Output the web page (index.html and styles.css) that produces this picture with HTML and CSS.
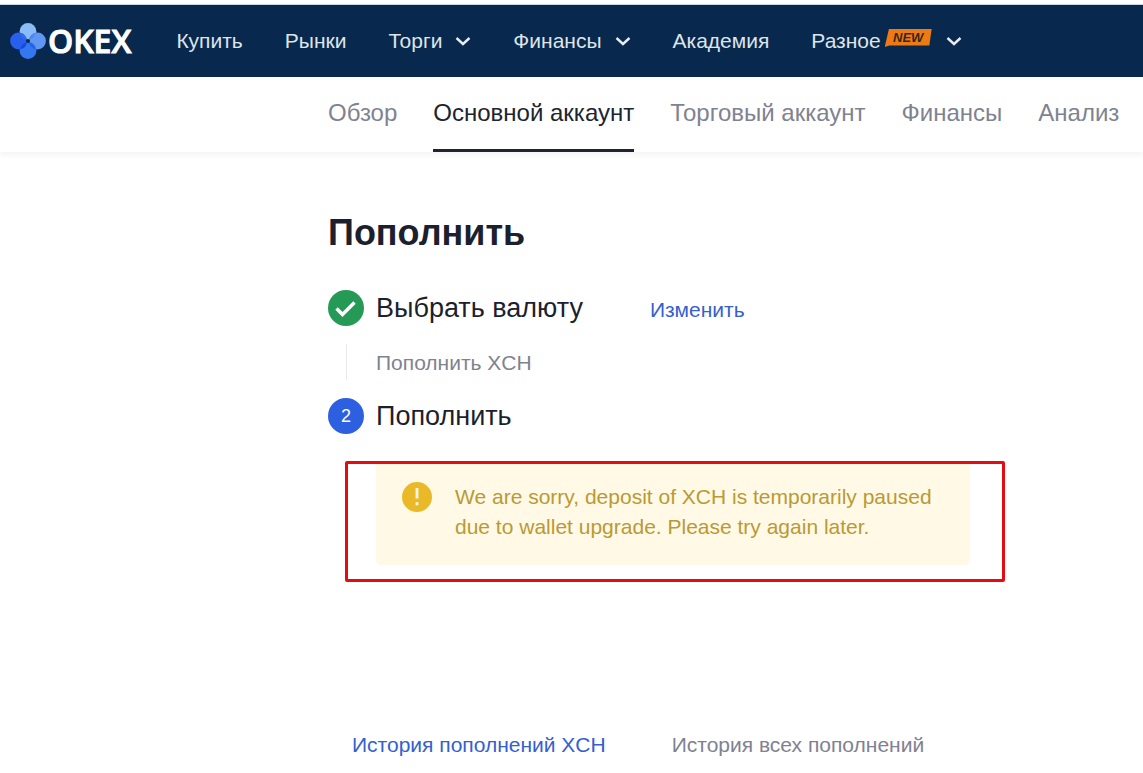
FILE: index.html
```html
<!DOCTYPE html>
<html lang="ru">
<head>
<meta charset="utf-8">
<title>OKEX</title>
<link rel="stylesheet" href="styles.css">
</head>
<body>
<header class="header">
  <a class="logo" href="#">
    <svg class="logo-mark" viewBox="0 0 36 36" aria-hidden="true">
      <circle cx="18" cy="8.500" r="8.400" fill="#8bbcf8"/>
      <circle cx="27.500" cy="18" r="8.400" fill="#6097f3"/>
      <circle cx="18" cy="27.500" r="8.400" fill="#3478f1"/>
      <circle cx="8.500" cy="18" r="8.400" fill="#2860ec"/>
      <path d="M10.500 10Q14.500 9.500 17 16.500Q11 15.500 10.500 10Z" fill="#306de9"/>
      <path d="M25.500 10Q25 15.500 19 16.500Q20.500 10 25.500 10Z" fill="#5089ec"/>
      <path d="M10.500 26Q11 20.500 17 19.500Q15.500 26 10.500 26Z" fill="#164bdc"/>
      <path d="M25.500 26Q25 20.500 19 19.500Q20.500 26 25.500 26Z" fill="#2264e3"/>
      <circle cx="18" cy="18" r="2" fill="#08284d"/>
    </svg>
    <span class="logo-text">OKEX</span>
  </a>
  <nav class="nav">
    <a class="nav-link" href="#">Купить</a>
    <a class="nav-link" href="#">Рынки</a>
    <a class="nav-link" href="#">Торги<svg class="chevron" viewBox="0 0 16 10" aria-hidden="true"><path d="M1.500 2L8 8L14.500 2"/></svg></a>
    <a class="nav-link" href="#">Финансы<svg class="chevron" viewBox="0 0 16 10" aria-hidden="true"><path d="M1.500 2L8 8L14.500 2"/></svg></a>
    <a class="nav-link" href="#">Академия</a>
    <a class="nav-link" href="#">Разное<span class="badge">NEW</span><svg class="chevron" viewBox="0 0 16 10" aria-hidden="true"><path d="M1.500 2L8 8L14.500 2"/></svg></a>
  </nav>
</header>
<nav class="tabs">
  <a class="tab" href="#">Обзор</a>
  <a class="tab tab-active" href="#">Основной аккаунт</a>
  <a class="tab" href="#">Торговый аккаунт</a>
  <a class="tab" href="#">Финансы</a>
  <a class="tab" href="#">Анализ</a>
</nav>
<main class="content">
  <h1 class="title">Пополнить</h1>
  <section class="step">
    <svg class="step-icon" viewBox="0 0 36 36" aria-hidden="true"><circle cx="18" cy="18" r="18" fill="#259a56"/><path d="M8.500 18.500l6 6L26.500 12.500" fill="none" stroke="#fff" stroke-width="3.400"/></svg>
    <h2 class="step-title">Выбрать валюту</h2>
    <a class="change" href="#">Изменить</a>
  </section>
  <div class="detail">
    <span class="line"></span>
    <p class="detail-text">Пополнить XCH</p>
  </div>
  <section class="step">
    <span class="step-icon step-number">2</span>
    <h2 class="step-title">Пополнить</h2>
  </section>
  <div class="alert" role="alert">
    <svg class="alert-icon" viewBox="0 0 30 30" aria-hidden="true"><circle cx="15" cy="15" r="15" fill="#e9b928"/><path d="M13.600 6h2.800v10.500h-2.800zM13.600 20.300h2.800v3h-2.800z" fill="#fff8e4"/></svg>
    <p class="alert-text">We are sorry, deposit of XCH is temporarily paused due to wallet upgrade. Please try again later.</p>
    <span class="highlight"></span>
  </div>
  <nav class="history">
    <a class="history-link history-active" href="#">История пополнений XCH</a>
    <a class="history-link" href="#">История всех пополнений</a>
  </nav>
</main>
</body>
</html>
```

FILE: styles.css
```css
* {
  box-sizing: border-box;
}

body {
  margin: 0;
  padding-top: 4px;
  background: #fff;
  color: #1b1f2e;
  font-family: "Liberation Sans", Arial, sans-serif;
  overflow-x: hidden;
}

a {
  text-decoration: none;
}

h1, h2, p {
  margin: 0;
  font-weight: 400;
}

.header {
  display: flex;
  align-items: center;
  gap: 45px;
  height: 73px;
  padding-left: 10px;
  border-top: 1px solid #cbd5e0;
  background: #08284d;
}

.logo {
  display: flex;
  align-items: center;
  gap: 2px;
  color: #fff;
}

.logo-mark {
  width: 36px;
  height: 36px;
}

.logo-text {
  font: 600 32px/34px "Open Sans", sans-serif;
  -webkit-text-stroke: 1px #fff;
}

.nav {
  display: flex;
  gap: 42px;
}

.nav-link {
  display: flex;
  align-items: center;
  color: #dfe4ea;
  font-size: 21px;
  line-height: 24px;
  white-space: nowrap;
}

.chevron {
  width: 16px;
  height: 10px;
  margin-left: 13px;
  fill: none;
  stroke: #e6ebf0;
  stroke-width: 2.4;
}

.badge {
  width: 47px;
  height: 18px;
  margin: 0 1px 6px 4px;
  background: #ee7a13;
  clip-path: polygon(9% 0, 100% 0, 95% 92%, 10% 92%, 0 100%);
  color: #37281f;
  font: italic 700 13px/17px "Liberation Sans", Arial, sans-serif;
  text-align: center;
}

.tabs {
  display: flex;
  gap: 36px;
  height: 75px;
  padding-left: 328px;
  box-shadow: 0 3px 6px rgba(0, 0, 0, 0.05);
}

.tab {
  border-bottom: 3px solid transparent;
  color: #7f8291;
  font-size: 24px;
  line-height: 72px;
  white-space: nowrap;
}

.tab-active {
  border-color: #20242e;
  color: #20242e;
}

.content {
  padding: 57px 24px 16px 328px;
}

.title {
  margin-bottom: 33px;
  font-size: 36px;
  font-weight: 700;
  line-height: 48px;
}

.step {
  display: flex;
  align-items: center;
}

.step-icon {
  width: 36px;
  height: 36px;
  margin-right: 12px;
}

.step-number {
  border-radius: 50%;
  background: #2d60e0;
  color: #fff;
  font-size: 18px;
  line-height: 36px;
  text-align: center;
}

.step-title {
  font-size: 27px;
  line-height: 36px;
}

.change {
  margin-left: 67px;
  padding-top: 4px;
  color: #3560cf;
  font-size: 21px;
  line-height: 24px;
}

.detail {
  display: flex;
  align-items: center;
  gap: 29px;
  padding: 18px 0 18px 18px;
}

.line {
  width: 1px;
  height: 36px;
  background: #e8e9ec;
}

.detail-text {
  padding-top: 2px;
  color: #7f8291;
  font-size: 21px;
  line-height: 24px;
}

.alert {
  position: relative;
  display: flex;
  align-items: flex-start;
  gap: 23px;
  max-width: 594px;
  margin: 27px 0 0 48px;
  padding: 21px 26px 23px;
  border-radius: 5px;
  background: #fff9e5;
}

.alert-icon {
  flex: none;
  width: 30px;
  height: 30px;
}

.alert-text {
  color: #b99a35;
  font-size: 21px;
  line-height: 30px;
}

.highlight {
  position: absolute;
  inset: 0 -35px -17px -31px;
  border: 3px solid #e40c10;
  border-radius: 2px;
}

.history {
  display: flex;
  gap: 66px;
  margin-top: 168px;
  padding-left: 24px;
}

.history-link {
  color: #7f8291;
  font-size: 21px;
  line-height: 24px;
}

.history-active {
  color: #3560cf;
}
```
